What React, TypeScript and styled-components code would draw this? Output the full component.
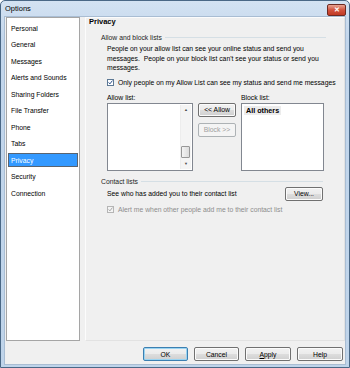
import styled, { createGlobalStyle } from "styled-components";

const GlobalStyle = createGlobalStyle`
  html, body {
    margin: 0;
    padding: 0;
    background: #ffffff;
  }
  body {
    font-family: "Liberation Sans", Arial, sans-serif;
    font-size: 6.8px;
    color: #000;
  }
`

const Window = styled.div`
  width: 350px;
  height: 368px;
  box-sizing: border-box;
  display: flex;
  flex-direction: column;
  background: linear-gradient(to bottom, #d3e2f2, #c2d6ec 40px, #bfd4ea);
  border: 1px solid #4a6886;
  border-radius: 5px 5px 0 0;
  overflow: hidden;
`

const TitleBar = styled.div`
  height: 15px;
  display: flex;
  align-items: center;
  justify-content: space-between;
  padding: 0 3px 0 4px;
  flex-shrink: 0;
`

const TitleText = styled.span`
  font-size: 7.5px;
  color: #000;
`

const CloseButton = styled.div`
  width: 17px;
  height: 10px;
  margin-top: 2px;
  border: 1px solid #6d2a22;
  border-radius: 2px;
  background: linear-gradient(to bottom, #e8a493, #d2533e 50%, #c13a24);
  display: flex;
  align-items: center;
  justify-content: center;
  color: #fff;
  font-size: 7px;
  font-weight: bold;
  line-height: 1;
`

const Client = styled.div`
  flex: 1;
  margin: 0 3px 2px 3px;
  background: #f0f0f0;
  border: 1px solid #a9bdd3;
  display: flex;
  flex-direction: column;
  padding: 0 0 2px 1px;
`

const Main = styled.div`
  display: flex;
  gap: 5px;
  height: 324px;
`

const Sidebar = styled.ul`
  width: 74px;
  box-sizing: border-box;
  margin: 0;
  padding: 3px 1px;
  list-style: none;
  background: #fff;
  border: 1px solid #a5a5a5;
`

const NavItem = styled.li<{ $active?: boolean }>`
  height: 14px;
  margin-bottom: 2.55px;
  display: flex;
  align-items: center;
  padding-left: 2px;
  box-sizing: border-box;
  white-space: nowrap;
  background: ${(p) => (p.$active ? "#3399ff" : "transparent")};
  color: ${(p) => (p.$active ? "#fff" : "#000")};
  border: 1px solid ${(p) => (p.$active ? "#5a6470" : "transparent")};
`

const Panel = styled.div`
  width: 260px;
  box-sizing: border-box;
  border: 1px solid #fcfcfc;
  border-right-color: #e2e2e2;
  border-bottom-color: #e2e2e2;
  padding: 0 0 0 3px;
  display: flex;
  flex-direction: column;
`

const PanelTitle = styled.div`
  font-weight: bold;
  font-size: 7.5px;
  height: 8px;
  line-height: 8px;
`

const GroupHeading = styled.div<{ $top: number; $right: number }>`
  display: flex;
  align-items: center;
  gap: 3px;
  margin-top: ${(p) => p.$top}px;
  margin-left: 12px;
  margin-right: ${(p) => p.$right}px;
  color: #1e1e1e;
  white-space: nowrap;

  &::after {
    content: "";
    flex: 1;
    height: 1px;
    background: #d5dfe5;
  }
`

const GroupBody = styled.div`
  padding-left: 18px;
  display: flex;
  flex-direction: column;
`

const Paragraph = styled.p`
  margin: 3px 0 0 0;
  line-height: 9.6px;
  white-space: nowrap;
`

const CheckRow = styled.label<{ $disabled?: boolean; $top: number }>`
  display: flex;
  align-items: center;
  gap: 4px;
  margin-top: ${(p) => p.$top}px;
  color: ${(p) => (p.$disabled ? "#8d8d8d" : "#000")};
  white-space: nowrap;
`

const Box = styled.span<{ $disabled?: boolean }>`
  width: 7px;
  height: 7px;
  box-sizing: border-box;
  border: 1px solid ${(p) => (p.$disabled ? "#b5b5b5" : "#5c7894")};
  background: ${(p) => (p.$disabled ? "#f4f4f4" : "#fff")};
  display: flex;
  align-items: center;
  justify-content: center;
  flex-shrink: 0;
`

const ListsRow = styled.div`
  display: flex;
  gap: 5px;
  margin-top: 7px;
`

const ListColumn = styled.div<{ $width: number }>`
  width: ${(p) => p.$width}px;
  display: flex;
  flex-direction: column;
`

const ListLabel = styled.div`
  height: 9px;
  line-height: 9px;
  margin-bottom: 1px;
`

const ListBox = styled.div`
  height: 68px;
  box-sizing: border-box;
  border: 1px solid #828790;
  background: #fff;
  display: flex;
  padding: 1px;
`

const ListContent = styled.div`
  flex: 1;
`

const BlockEntry = styled.div`
  display: inline-block;
  margin: 1px 0 0 1px;
  padding: 0 2px;
  background: #ececec;
  font-weight: bold;
  font-size: 7.2px;
  line-height: 9px;
`

const Scrollbar = styled.div`
  width: 10px;
  display: flex;
  flex-direction: column;
  background: #f4f4f4;
  border-left: 1px solid #ededed;
`

const ScrollArrow = styled.div`
  height: 10px;
  display: flex;
  align-items: center;
  justify-content: center;
  color: #4d4d4d;
  font-size: 4px;
`

const ScrollTrack = styled.div`
  flex: 1;
  display: flex;
  flex-direction: column;
  justify-content: flex-end;
`

const Thumb = styled.div`
  height: 10px;
  margin: 0 1px 1px 0;
  border: 1px solid #979797;
  border-radius: 1px;
  background: linear-gradient(to right, #f3f3f3, #dcdcdc);
`

const MoveButtons = styled.div`
  width: 38px;
  display: flex;
  flex-direction: column;
  gap: 6px;
  padding-top: 10px;
`

const Button = styled.button<{ $width?: number; $default?: boolean }>`
  width: ${(p) => (p.$width ? `${p.$width}px` : "100%")};
  height: 14px;
  padding: 0;
  font-family: "Liberation Sans", Arial, sans-serif;
  font-size: 6.8px;
  color: #000;
  border: 1px solid ${(p) => (p.$default ? "#3c7fb1" : "#707070")};
  border-radius: 2px;
  background: linear-gradient(to bottom, #f2f2f2 0%, #ebebeb 50%, #dddddd 51%, #cfcfcf 100%);
  box-shadow: inset 0 0 0 1px ${(p) => (p.$default ? "#9ad4f2" : "#fbfbfb")};

  &:disabled {
    color: #a0a0a0;
    border-color: #adb2b5;
    background: #f4f4f4;
    box-shadow: none;
  }
`

const ContactRow = styled.div`
  display: flex;
  align-items: center;
  justify-content: space-between;
  margin-top: 2px;
  margin-right: 21px;
`

const Footer = styled.div`
  display: flex;
  justify-content: flex-end;
  gap: 6px;
  padding: 6px 2px 0 0;
`

const Underline = styled.span`
  text-decoration: underline;
`

const Check = ({ disabled }: { disabled?: boolean }) => (
  <Box $disabled={disabled}>
    <svg width="5" height="5" viewBox="0 0 5 5">
      <path
        d="M0.6 2.4 L1.9 3.9 L4.4 0.6"
        fill="none"
        stroke={disabled ? "#a8a8a8" : "#2a4f8a"}
        strokeWidth="1"
      />
    </svg>
  </Box>
)

const navItems = [
  "Personal",
  "General",
  "Messages",
  "Alerts and Sounds",
  "Sharing Folders",
  "File Transfer",
  "Phone",
  "Tabs",
  "Privacy",
  "Security",
  "Connection",
]

const App = () => {
  return (
    <>
      <GlobalStyle />
      <Window>
        <TitleBar>
          <TitleText>Options</TitleText>
          <CloseButton>✕</CloseButton>
        </TitleBar>
        <Client>
          <Main>
            <Sidebar>
              {navItems.map((item) => (
                <NavItem key={item} $active={item === "Privacy"}>
                  {item}
                </NavItem>
              ))}
            </Sidebar>
            <Panel>
              <PanelTitle>Privacy</PanelTitle>
              <GroupHeading $top={8} $right={18}>Allow and block lists</GroupHeading>
              <GroupBody>
                <Paragraph>
                  People on your allow list can see your online status and send you
                  <br />
                  messages.&nbsp; People on your block list can't see your status or send you
                  <br />
                  messages.
                </Paragraph>
                <CheckRow $top={6}>
                  <Check />
                  Only people on my Allow List can see my status and send me messages
                </CheckRow>
                <ListsRow>
                  <ListColumn $width={86}>
                    <ListLabel>Allow list:</ListLabel>
                    <ListBox>
                      <ListContent />
                      <Scrollbar>
                        <ScrollArrow>▲</ScrollArrow>
                        <ScrollTrack>
                          <Thumb />
                        </ScrollTrack>
                        <ScrollArrow>▼</ScrollArrow>
                      </Scrollbar>
                    </ListBox>
                  </ListColumn>
                  <MoveButtons>
                    <Button>&lt;&lt; Allow</Button>
                    <Button disabled>Block &gt;&gt;</Button>
                  </MoveButtons>
                  <ListColumn $width={83}>
                    <ListLabel>Block list:</ListLabel>
                    <ListBox>
                      <ListContent>
                        <BlockEntry>All others</BlockEntry>
                      </ListContent>
                    </ListBox>
                  </ListColumn>
                </ListsRow>
              </GroupBody>
              <GroupHeading $top={7} $right={21}>Contact lists</GroupHeading>
              <GroupBody>
                <ContactRow>
                  See who has added you to their contact list
                  <Button $width={38}>View...</Button>
                </ContactRow>
                <CheckRow $top={5} $disabled>
                  <Check disabled />
                  Alert me when other people add me to their contact list
                </CheckRow>
              </GroupBody>
            </Panel>
          </Main>
          <Footer>
            <Button $width={45} $default>OK</Button>
            <Button $width={45}>Cancel</Button>
            <Button $width={46}>
              <Underline>A</Underline>pply
            </Button>
            <Button $width={46}>Help</Button>
          </Footer>
        </Client>
      </Window>
    </>
  )
}

export default App
